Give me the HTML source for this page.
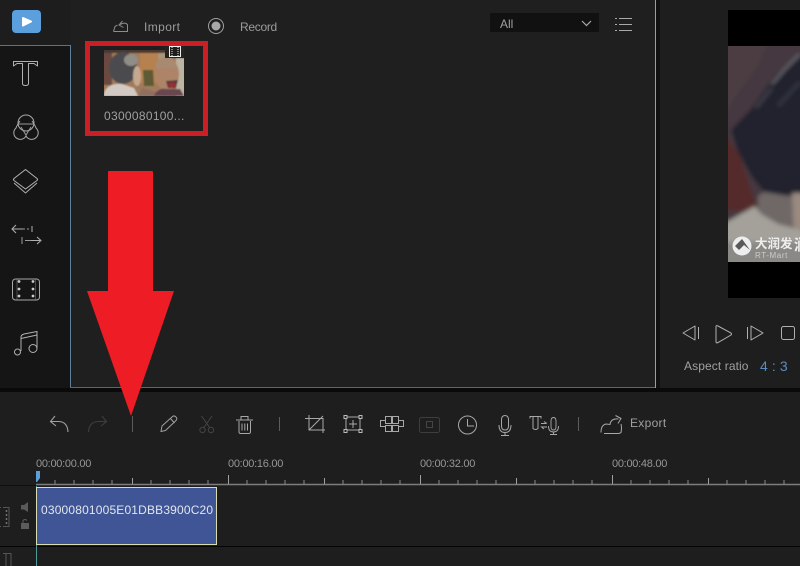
<!DOCTYPE html>
<html><head><meta charset="utf-8">
<style>
html,body{margin:0;padding:0;background:#1e1e1e}
#r{position:relative;width:800px;height:566px;overflow:hidden;background:#1e1e1e;font-family:"Liberation Sans","Noto Sans CJK SC",sans-serif;color:#a6a6a6}
.a{position:absolute}
.t{position:absolute;white-space:nowrap;font-size:12px;line-height:14px}
svg{position:absolute;left:0;top:0}
</style></head>
<body><div id="r">
<div class="a" style="left:0;top:0;width:70px;height:45px;background:#1d1d1d"></div>
<div class="a" style="left:0;top:45px;width:70px;height:343px;background:#151515"></div>
<div class="a" style="left:71px;top:0;width:584px;height:388px;background:#1f1f1f"></div>
<div class="a" style="left:0;top:45px;width:71px;height:1px;background:#56748e"></div>
<div class="a" style="left:70px;top:45px;width:1px;height:343px;background:#5f7f9c"></div>
<div class="a" style="left:70px;top:387px;width:586px;height:1px;background:#4d6a82"></div>
<div class="a" style="left:655px;top:0;width:1px;height:388px;background:#7fa6c4"></div>
<div class="a" style="left:656px;top:0;width:4px;height:390px;background:#111"></div>
<div class="a" style="left:0;top:388px;width:800px;height:4px;background:#0a0a0a"></div>

<!-- Preview -->
<div class="a" style="left:728px;top:10px;width:72px;height:288px;background:#000"></div>
<div class="a" style="left:728px;top:46px;width:72px;height:216px;overflow:hidden;background:#443840">
<svg width="72" height="216" viewBox="0 0 72 216">
<defs><filter id="b1" x="-20%" y="-20%" width="140%" height="140%"><feGaussianBlur stdDeviation="2"/></filter></defs>
<g filter="url(#b1)">
<rect x="-5" y="-5" width="82" height="226" fill="#443840"/>
<path d="M-5 -5H40L30 20L8 50L-5 70Z" fill="#4b3c42"/>
<path d="M-5 85L12 110L30 165H-5Z" fill="#552a29"/>
<path d="M80 4L47 30L24 62L3 84L10 106L24 131L37 147L80 152Z" fill="#23242d"/>
<path d="M44 38L58 22L72 8" stroke="#6f6f76" stroke-width="2" fill="none"/>
<path d="M28 62L44 42" stroke="#3f414c" stroke-width="3" fill="none"/>
<path d="M50 60L72 36" stroke="#33353f" stroke-width="4" fill="none"/>
<path d="M30 150L36 146L60 150L80 148V190H30Z" fill="#706866"/>
<path d="M64 147H80V190H66Z" fill="#9a8a80"/>
<path d="M-5 178L27 160L33 168L50 178L80 186V221H-5Z" fill="#a3a199"/>
<path d="M-5 196H80V221H-5Z" fill="#8a8985"/>
</g>
<circle cx="14" cy="200" r="9.500" fill="#eee"/>
<path d="M7 200L14 193L22 204L16 199L11 204Z" fill="#5a5a5a"/>
<text x="27" y="202" font-family="'Noto Sans CJK SC',sans-serif" font-size="12.500" font-weight="700" fill="#eee">大润发</text>
<text x="27" y="212" font-family="'Liberation Sans',sans-serif" font-size="8" letter-spacing=".6" fill="#ccc">RT-Mart</text>
<text x="66" y="204" font-family="'Noto Sans CJK SC',sans-serif" font-size="15" font-weight="700" fill="#eee">润</text>
</svg></div>

<!-- Thumbnail -->
<div class="a" style="left:104px;top:50px;width:80px;height:46px;overflow:hidden;background:#8a6a50">
<svg width="80" height="46" viewBox="0 0 80 46">
<defs><filter id="b2" x="-20%" y="-20%" width="140%" height="140%"><feGaussianBlur stdDeviation=".7"/></filter></defs>
<g filter="url(#b2)">
<rect x="-2" y="-2" width="84" height="50" fill="#a07a5a"/>
<rect x="-2" y="-2" width="84" height="5" fill="#4a3830"/>
<rect x="36" y="3" width="18" height="30" fill="#b5814f"/>
<rect x="54" y="3" width="14" height="14" fill="#a89478"/>
<rect x="-2" y="3" width="10" height="32" fill="#6b4a3f"/>
<rect x="68" y="-2" width="14" height="10" fill="#3a3632"/>
<rect x="72" y="8" width="10" height="40" fill="#bcb3a0"/>
<path d="M39 20L49 20L50 36H40Z" fill="#5d5a35"/>
<ellipse cx="19" cy="18" rx="14" ry="16" fill="#4c4c4f"/>
<ellipse cx="27" cy="10" rx="7" ry="6" fill="#8f8d85"/>
<ellipse cx="33" cy="26" rx="4" ry="10" fill="#c5a890"/>
<path d="M0 46C0 37 8 33 18 34L30 38L34 46Z" fill="#d2cac2"/>
<path d="M34 46L38 38L52 42V46Z" fill="#8f7060"/>
<ellipse cx="63" cy="24" rx="12" ry="16" fill="#ae8468"/>
<path d="M51 18C52 9 59 7 63 7C70 8 73 12 73 18Z" fill="#a88a72"/>
<path d="M62 31L74 30L72 38L64 38Z" fill="#5a3a3a"/>
<ellipse cx="68" cy="35" rx="3.500" ry="2.500" fill="#a02c34"/>
<path d="M50 46C52 40 58 38 62 39L76 39L80 46Z" fill="#684650"/>
</g>
</svg></div>
<svg width="800" height="566" viewBox="0 0 800 566" fill="none" stroke="#a8a8a8" stroke-width="1">
<!-- thumb icon -->
<rect x="165" y="44" width="19" height="14" fill="#26231f" stroke="none"/>
<rect x="169.500" y="46.500" width="11" height="10" fill="#1e1e1e" stroke="#eee"/>
<path d="M172 47V56M178 47V56" stroke="#eee" stroke-dasharray="1 1"/>
<!-- logo -->
<rect x="12" y="10" width="29" height="23" rx="4" fill="#5ba0dc" stroke="none"/>
<path d="M23 18L31 21.500L23 25.500Z" fill="#fff" stroke="#fff" stroke-linejoin="round" stroke-width="2"/>
<!-- red box -->
<rect x="87.500" y="43.500" width="118" height="90" stroke="#cb1f26" stroke-width="5"/>
<!-- import icon -->
<path d="M113.500 31.500H127.500V25Q126 21.500 120 24.500M113.500 31.500L115 26.500L117.500 25M122.500 21L119 25L123.500 27.500" stroke="#8c8c8c"/>
<!-- record -->
<circle cx="216" cy="26" r="7.500" stroke="#a0a0a0"/>
<circle cx="216" cy="26" r="4.500" fill="#a8a8a8" stroke="none"/>
<!-- side icons -->
<path d="M13.500 66L13.500 61.500H37.500V66L34 63.500H28.500V83.500Q28.500 85.500 25.500 85.500Q22.500 85.500 22.500 83.500V63.500H17Z" stroke="#b0b0b0" stroke-linejoin="round"/>
<circle cx="26" cy="123" r="8" stroke="#aaa"/>
<path d="M20 121Q17 125 16 128A6.500 6.500 0 1 0 26 136A6.500 6.500 0 1 0 36 128Q35 125 32 121" stroke="#aaa"/>
<path d="M18.500 124H33.500M21 127L26 135L31 127M26 136V134" stroke="#999"/>
<path d="M25.500 169.500L37 178.500Q38 179.500 37 180.500L25.500 189L14 180.500Q13 179.500 14 178.500Z" stroke="#b0b0b0"/>
<path d="M14 183L25.500 193L37 183" stroke="#b0b0b0"/>
<path d="M12 229H23" stroke="#b0b0b0"/><path d="M23 229H30" stroke="#999" stroke-dasharray="2 2"/><path d="M16 225L12 229L16 233M32 226V232" stroke="#b0b0b0"/>
<path d="M22 237V244M25 240.500H31" stroke="#999"/><path d="M31 240.500H40M37 237L41 240.500L37 244" stroke="#b0b0b0"/>
<rect x="12.500" y="279" width="27" height="21" rx="3" stroke="#a8a8a8"/>
<path d="M17 279.500V299.500M35.500 279.500V299.500" stroke="#4a4a4a"/>
<g fill="#ccc" stroke="none"><circle cx="19" cy="281.500" r="1.400"/><circle cx="19" cy="289" r="1.400"/><circle cx="19" cy="296" r="1.400"/><circle cx="33" cy="281.500" r="1.400"/><circle cx="33" cy="289" r="1.400"/><circle cx="33" cy="296" r="1.400"/></g>
<path d="M21 351V337Q21 335 24 334L37 331.500V348" stroke="#b0b0b0"/>
<path d="M21 338.500L37 335" stroke="#b0b0b0"/>
<circle cx="17.500" cy="352" r="3" stroke="#b0b0b0"/><circle cx="33" cy="348.500" r="4" stroke="#b0b0b0"/>
<!-- dropdown -->
<rect x="490" y="13" width="109" height="19" fill="#111" stroke="none"/>
<path d="M582 21L586.500 25.500L591 21" stroke="#aaa" stroke-width="1.200"/>
<path d="M619 18.500H632M619 24.500H632M619 30.500H632" stroke="#aaa"/>
<path d="M615 18.500H617M615 24.500H617M615 30.500H617" stroke="#aaa"/>
<!-- player -->
<path d="M695 326V340L683 333Z" stroke="#b0b0b0" stroke-linejoin="round"/><path d="M698.500 327V339" stroke="#b0b0b0"/>
<path d="M716 326.500Q716 325 718 326L731 333Q732 334 731 335L718 342.500Q716 343.500 716 342Z" stroke="#b0b0b0"/>
<path d="M747.500 327V339" stroke="#b0b0b0"/><path d="M751 326V340L763 333Z" stroke="#b0b0b0" stroke-linejoin="round"/>
<rect x="781.500" y="326.500" width="13" height="13" rx="2" stroke="#b0b0b0"/>
<!-- toolbar -->
<path d="M55 416L50.500 421.500L56 426M51 421.500H59Q67.500 422 68 432" stroke="#a0a0a0" stroke-width="1.100"/>
<path d="M102 416L106.500 421.500L101 426M106 421.500H98Q89 422 88.500 432" stroke="#3e3e3e" stroke-width="1.100"/>
<path d="M132.500 416V432" stroke="#5c5c5c"/>
<path d="M161 431.500L162 426L172.500 416.500Q174.500 415 176.500 417.500Q177.500 419 175.500 421L165.500 430.500Z M170.500 418.500L174.500 423" stroke="#a0a0a0"/>
<g stroke="#444"><path d="M201.500 416L210 428M212 416L203.500 428"/><circle cx="202.500" cy="430" r="2.700"/><circle cx="211" cy="430" r="2.700"/></g>
<path d="M236 420H253M239 421V432Q239 433.500 241 433.500H248.500Q250.500 433.500 250.500 432V421M241 420V416.500H248V420M242 423.500V430.500M244.800 423.500V430.500M247.500 423.500V430.500" stroke="#a8a8a8"/>
<path d="M279.500 417V431" stroke="#5c5c5c"/>
<path d="M309 415V430H325M305 418.500H323V433M309 430L323 416" stroke="#a8a8a8"/>
<rect x="346" y="417" width="14" height="13" stroke="#a8a8a8"/>
<rect x="344" y="415.500" width="3" height="3" fill="#1e1e1e" stroke="#bbb"/><rect x="359" y="415.500" width="3" height="3" fill="#1e1e1e" stroke="#bbb"/><rect x="344" y="429.500" width="3" height="3" fill="#1e1e1e" stroke="#bbb"/><rect x="359" y="429.500" width="3" height="3" fill="#1e1e1e" stroke="#bbb"/>
<path d="M353 420V428M349 424H357" stroke="#aaa"/>
<path d="M385.500 416.500H391.500V423.500H385.500ZM392.500 416.500H398.500V423.500H392.500ZM385.500 425.500H391.500V431.500H385.500ZM392.500 425.500H398.500V431.500H392.500ZM385.500 420.500H380.500V426.500H385.500M398.500 420.500H403.500V426.500H398.500" stroke="#a8a8a8"/>
<rect x="419.500" y="417.500" width="20" height="15" rx="2" stroke="#3e3e3e"/><rect x="426.500" y="421.500" width="6" height="6" stroke="#444"/>
<circle cx="467.500" cy="425" r="9" stroke="#a8a8a8"/><path d="M467.500 419V426H474" stroke="#a8a8a8"/>
<path d="M501.500 420Q501.500 415.500 505 415.500Q508.500 415.500 508.500 420V426Q508.500 430 505 430Q501.500 430 501.500 426Z" stroke="#a8a8a8"/>
<path d="M499 425Q499 432.500 505 432.500Q511 432.500 511 425M505 432.500V435M501 435.500H509" stroke="#a8a8a8"/>
<path d="M530 418.500V416.500H541V418.500M533 416.500V428.500Q535.500 430.500 538 428.500V416.500" stroke="#a8a8a8"/>
<path d="M541 423.500H546M544 421.500L547 423.500M547 427H541.500L544 429" stroke="#a8a8a8" stroke-width=".9"/>
<path d="M551 421Q551 417.500 553.500 417.500Q556 417.500 556 421V426.500Q556 430 553.500 430Q551 430 551 426.500Z M548.500 426Q548.500 432 553.500 432Q558.500 432 558.500 426M553.500 432V434M550 434.500H557" stroke="#a8a8a8" stroke-width=".9"/>
<path d="M578.500 417V431" stroke="#5c5c5c"/>
<path d="M601 432.500Q601 425 606 424L610 424.500Q611 418 618.500 419M615.500 415.500L621 418.500L618 423.500M621 424Q622 428 621 432.500Q620 433.500 618 433.500H604" stroke="#a8a8a8"/>
<!-- ruler -->
<path d="M36 484.500H800" stroke="#7d7d7d" stroke-width="1.500"/>
<path d="M0 546.500H800" stroke="#050505"/>
<path d="M0 485.500H36" stroke="#0f0f0f"/>
<path d="M55 484V480M74 484V480M93 484V480M112 484V480M151 484V480M170 484V480M189 484V480M208 484V480M247 484V480M266 484V480M285 484V480M304 484V480M343 484V480M362 484V480M381 484V480M400 484V480M439 484V480M458 484V480M477 484V480M496 484V480M535 484V480M554 484V480M573 484V480M592 484V480M631 484V480M650 484V480M669 484V480M688 484V480M727 484V480M746 484V480M765 484V480M784 484V480" stroke="#8a8a8a"/>
<path d="M132.500 484V478M324.500 484V478M516.500 484V478M708.500 484V478M228.500 484V475M420.500 484V475M612.500 484V475" stroke="#a0a0a0"/>
<path d="M36.500 486V566" stroke="#4f9a9a"/>
<path d="M36 471H40V478L37 482H36Z" fill="#5ba0dc" stroke="none"/>
<!-- track icons -->
<path d="M3 507.500H9V526.500H3M0 507.500H1M0 526.500H1" stroke="#555"/>
<g fill="#888" stroke="none"><circle cx="6.500" cy="511" r=".9"/><circle cx="6.500" cy="515" r=".9"/><circle cx="6.500" cy="519" r=".9"/><circle cx="6.500" cy="523" r=".9"/></g>
<path d="M21 505H24L28 502V512L24 509.500H21Z" fill="#5a5a5a" stroke="none"/>
<rect x="21" y="523" width="8" height="6" fill="#5c5c5c" stroke="none"/><path d="M23 523V520.500Q25 518.500 27 520.500" stroke="#5c5c5c"/>
<path d="M3 553.500H11V566M6 553.500V566" stroke="#555"/>
<!-- arrow -->
<path d="M108 172Q108 171 109 171H152Q153 171 153 172V291H174L131 416L87 291H108Z" fill="#ee1c25" stroke="none"/>
</svg>

<!-- clip -->
<div class="a" style="left:36px;top:487px;width:181px;height:58px;box-sizing:border-box;background:#3f5595;border:1px solid #d8dcae;color:#e2e6f0;font-size:12px;overflow:hidden"><span style="position:absolute;left:4px;top:15px;white-space:nowrap;letter-spacing:.17px">03000801005E01DBB3900C20</span></div>

<div class="t" style="left:144px;top:20px;letter-spacing:.4px;color:#9c9c9c">Import</div>
<div class="t" style="left:240px;top:20px;letter-spacing:-.3px;color:#9c9c9c">Record</div>
<div class="t" style="left:104px;top:109px;letter-spacing:.3px;color:#a0a0a0">0300080100...</div>
<div class="t" style="left:500px;top:17px;color:#a0a0a0">All</div>
<div class="t" style="left:684px;top:359px;letter-spacing:.1px;color:#a0a0a0">Aspect ratio</div>
<div class="t" style="left:760px;top:359px;font-size:14px;letter-spacing:.1px;color:#5b8dc0">4 : 3</div>
<div class="t" style="left:630px;top:416px;letter-spacing:.3px;color:#a0a0a0">Export</div>
<div class="t" style="left:36px;top:457px;font-size:11px;letter-spacing:-.28px;color:#969696">00:00:00.00</div>
<div class="t" style="left:228px;top:457px;font-size:11px;letter-spacing:-.28px;color:#969696">00:00:16.00</div>
<div class="t" style="left:420px;top:457px;font-size:11px;letter-spacing:-.28px;color:#969696">00:00:32.00</div>
<div class="t" style="left:612px;top:457px;font-size:11px;letter-spacing:-.28px;color:#969696">00:00:48.00</div>
</div></body></html>
